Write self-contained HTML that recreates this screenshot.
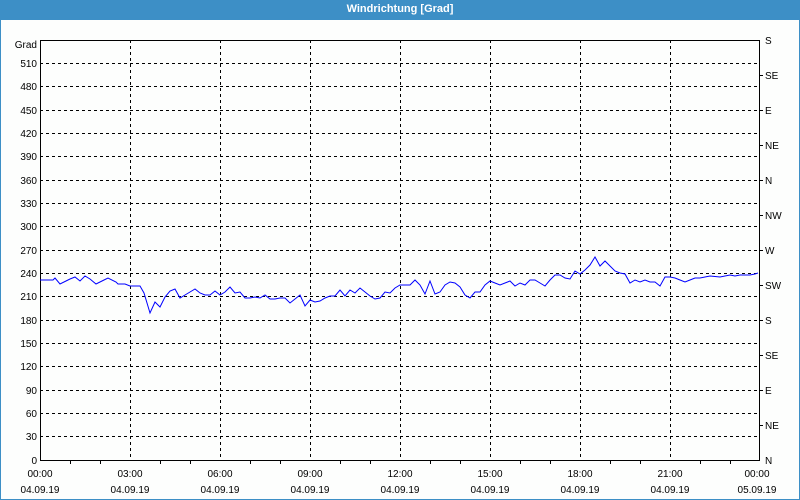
<!DOCTYPE html>
<html><head><meta charset="utf-8"><style>
html,body{margin:0;padding:0;background:#fff}
#w{position:relative;width:798px;height:499px;border:1px solid #3d8fc6;border-top:none;background:#fdfefd;overflow:hidden}
#t{position:absolute;left:0;top:0;width:798px;height:20px;background:#3d8fc6;color:#fff;font:bold 11px "Liberation Sans",sans-serif;text-align:center;line-height:19px}
svg{position:absolute;left:-1px;top:0}
text{font-family:"Liberation Sans",sans-serif;font-size:10px;fill:#000}
</style></head><body><div id="w"><div id="t">Windrichtung [Grad]</div>
<svg width="800" height="500" viewBox="0 0 800 500">
<g stroke="#000" stroke-width="1" stroke-dasharray="3,3" shape-rendering="crispEdges">
<line x1="40" y1="63.5" x2="760" y2="63.5"/><line x1="40" y1="86.5" x2="760" y2="86.5"/><line x1="40" y1="110.5" x2="760" y2="110.5"/><line x1="40" y1="133.5" x2="760" y2="133.5"/><line x1="40" y1="156.5" x2="760" y2="156.5"/><line x1="40" y1="180.5" x2="760" y2="180.5"/><line x1="40" y1="203.5" x2="760" y2="203.5"/><line x1="40" y1="226.5" x2="760" y2="226.5"/><line x1="40" y1="250.5" x2="760" y2="250.5"/><line x1="40" y1="273.5" x2="760" y2="273.5"/><line x1="40" y1="296.5" x2="760" y2="296.5"/><line x1="40" y1="320.5" x2="760" y2="320.5"/><line x1="40" y1="343.5" x2="760" y2="343.5"/><line x1="40" y1="366.5" x2="760" y2="366.5"/><line x1="40" y1="390.5" x2="760" y2="390.5"/><line x1="40" y1="413.5" x2="760" y2="413.5"/><line x1="40" y1="436.5" x2="760" y2="436.5"/>
<line x1="130.5" y1="40" x2="130.5" y2="460"/><line x1="220.5" y1="40" x2="220.5" y2="460"/><line x1="310.5" y1="40" x2="310.5" y2="460"/><line x1="400.5" y1="40" x2="400.5" y2="460"/><line x1="490.5" y1="40" x2="490.5" y2="460"/><line x1="580.5" y1="40" x2="580.5" y2="460"/><line x1="670.5" y1="40" x2="670.5" y2="460"/>
</g>
<rect x="40.5" y="40.5" width="719" height="420" fill="none" stroke="#000" shape-rendering="crispEdges"/>
<g stroke="#000" shape-rendering="crispEdges">
<line x1="70.5" y1="461" x2="70.5" y2="464"/><line x1="100.5" y1="461" x2="100.5" y2="464"/><line x1="160.5" y1="461" x2="160.5" y2="464"/><line x1="190.5" y1="461" x2="190.5" y2="464"/><line x1="250.5" y1="461" x2="250.5" y2="464"/><line x1="280.5" y1="461" x2="280.5" y2="464"/><line x1="340.5" y1="461" x2="340.5" y2="464"/><line x1="370.5" y1="461" x2="370.5" y2="464"/><line x1="430.5" y1="461" x2="430.5" y2="464"/><line x1="460.5" y1="461" x2="460.5" y2="464"/><line x1="520.5" y1="461" x2="520.5" y2="464"/><line x1="550.5" y1="461" x2="550.5" y2="464"/><line x1="610.5" y1="461" x2="610.5" y2="464"/><line x1="640.5" y1="461" x2="640.5" y2="464"/><line x1="700.5" y1="461" x2="700.5" y2="464"/><line x1="730.5" y1="461" x2="730.5" y2="464"/>
<line x1="760" y1="75.5" x2="763" y2="75.5"/><line x1="760" y1="110.5" x2="763" y2="110.5"/><line x1="760" y1="145.5" x2="763" y2="145.5"/><line x1="760" y1="180.5" x2="763" y2="180.5"/><line x1="760" y1="215.5" x2="763" y2="215.5"/><line x1="760" y1="250.5" x2="763" y2="250.5"/><line x1="760" y1="285.5" x2="763" y2="285.5"/><line x1="760" y1="320.5" x2="763" y2="320.5"/><line x1="760" y1="355.5" x2="763" y2="355.5"/><line x1="760" y1="390.5" x2="763" y2="390.5"/><line x1="760" y1="425.5" x2="763" y2="425.5"/>
</g>
<polyline fill="none" stroke="#0000ff" stroke-width="1" points="40,280 53,280 55,278 60,284 66,281 70,279 75,277 80,281 85,276 90,279 96,284 104,280 108,278 116,282 118,284 125,284 130,286 140,286 144,293 150,313 155,302 160,307 165,297 170,291 175,289 180,298 185,295 190,292 195,289 200,293 205,295 210,295 215,291 220,295 225,292 230,287 235,293 240,292 245,298 250,298 255,297 260,298 265,295 270,299 275,299 280,298 285,298 290,303 300,295 305,306 310,300 315,302 320,301 325,298 330,296 335,296 340,290 345,296 350,290 355,293 360,288 365,292 370,296 375,299 380,298 385,292 390,293 395,288 400,285 410,285 415,280 420,285 425,294 430,281 435,294 440,292 445,285 450,282 455,283 460,287 465,295 470,298 475,292 480,292 485,285 490,281 495,283 500,285 505,283 510,281 515,286 520,283 525,285 530,280 535,280 540,283 545,286 550,280 555,275 560,275 565,278 570,279 575,271 580,274 585,270 590,265 595,257 600,266 605,261 610,266 615,271 620,273 625,274 630,283 635,280 640,282 645,280 650,282 655,282 660,286 665,277 670,277 675,278 680,280 685,282 690,280 695,278 700,278 705,277 710,276 720,277 730,275 735,276 740,275 750,275 755,274 758,273"/>
<g text-anchor="end">
<text x="37" y="48">Grad</text><text x="37" y="67">510</text><text x="37" y="90">480</text><text x="37" y="114">450</text><text x="37" y="137">420</text><text x="37" y="160">390</text><text x="37" y="184">360</text><text x="37" y="207">330</text><text x="37" y="230">300</text><text x="37" y="254">270</text><text x="37" y="277">240</text><text x="37" y="300">210</text><text x="37" y="324">180</text><text x="37" y="347">150</text><text x="37" y="370">120</text><text x="37" y="394">90</text><text x="37" y="417">60</text><text x="37" y="440">30</text><text x="37" y="464">0</text>
</g>
<g>
<text x="765" y="44">S</text><text x="765" y="79">SE</text><text x="765" y="114">E</text><text x="765" y="149">NE</text><text x="765" y="184">N</text><text x="765" y="219">NW</text><text x="765" y="254">W</text><text x="765" y="289">SW</text><text x="765" y="324">S</text><text x="765" y="359">SE</text><text x="765" y="394">E</text><text x="765" y="429">NE</text><text x="765" y="464">N</text>
</g>
<g text-anchor="middle">
<text x="40" y="477">00:00</text><text x="130" y="477">03:00</text><text x="220" y="477">06:00</text><text x="310" y="477">09:00</text><text x="400" y="477">12:00</text><text x="490" y="477">15:00</text><text x="580" y="477">18:00</text><text x="670" y="477">21:00</text><text x="757" y="477">00:00</text>
<text x="40" y="493">04.09.19</text><text x="130" y="493">04.09.19</text><text x="220" y="493">04.09.19</text><text x="310" y="493">04.09.19</text><text x="400" y="493">04.09.19</text><text x="490" y="493">04.09.19</text><text x="580" y="493">04.09.19</text><text x="670" y="493">04.09.19</text><text x="757" y="493">05.09.19</text>
</g>
</svg></div></body></html>
